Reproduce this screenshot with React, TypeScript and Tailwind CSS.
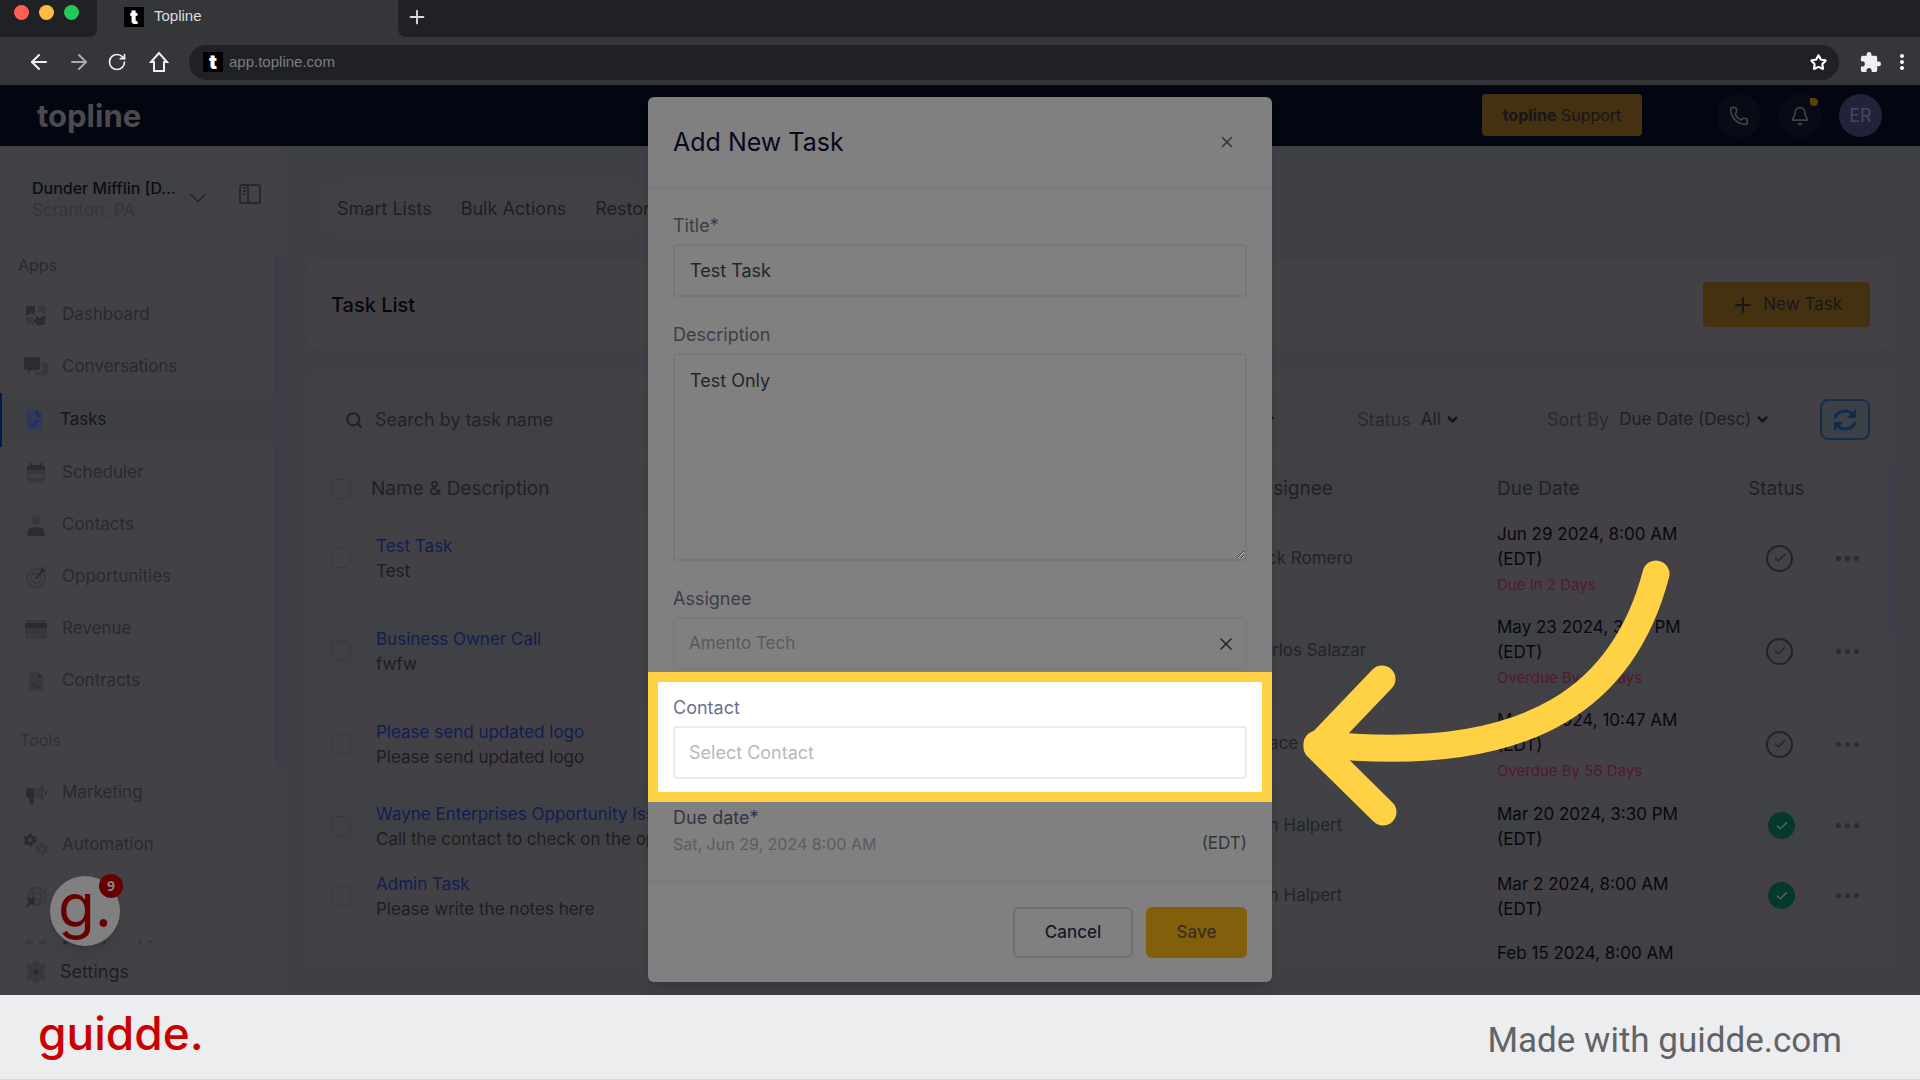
import type { ReactNode } from "react"
import {
  ArrowLeft,
  ArrowRight,
  Bell,
  Check,
  ChevronDown,
  Phone,
  Plus,
  RotateCw,
  Search,
  Star,
  X,
} from "lucide-react"
import { MdExtension, MdMoreVert } from "react-icons/md"

/* ---------- Sidebar icons (two-tone) ---------- */

const dark = "#2b2b33"
const soft = "#38383e"

const Icon = ({ children }: { children: ReactNode }) => (
  <svg viewBox="0 0 24 24" className="size-6 shrink-0" aria-hidden="true">
    {children}
  </svg>
)

const DashboardIcon = () => (
  <Icon>
    <path d="M2 14h8v8H4a2 2 0 0 1-2-2z" fill={soft} />
    <path d="M14 2h6a2 2 0 0 1 2 2v7h-3a2.500 2.500 0 0 0-5 0z" fill={soft} />
    <path d="M4 3h7v9H9a2 2 0 0 0-4 0H2V5a2 2 0 0 1 2-2z" fill={dark} />
    <path d="M12 13h2a2 2 0 0 0 4 0h3v7a2 2 0 0 1-2 2h-7v-2a2 2 0 0 1 0-4z" fill={dark} />
  </Icon>
)

const ConversationsIcon = () => (
  <Icon>
    <path d="M17 8h5a2 2 0 0 1 2 2v8a2 2 0 0 1-2 2h-1v3l-4-3h-4a2 2 0 0 1-2-2v-1h5a2 2 0 0 0 2-2z" fill={soft} />
    <path d="M2 2h12a2 2 0 0 1 2 2v9a2 2 0 0 1-2 2H7l-3 3v-3H2a2 2 0 0 1-2-2V4a2 2 0 0 1 2-2z" fill={dark} />
  </Icon>
)

const TasksIcon = () => (
  <Icon>
    <path d="M4 2h9l5 6v12a2 2 0 0 1-2 2H4a2 2 0 0 1-2-2V4a2 2 0 0 1 2-2z" fill="#303a58" />
    <path d="M12 2l6 6v1h-4a2 2 0 0 1-2-2z" fill="#19315f" />
    <path d="M6 15l3 3 5-6" fill="none" stroke="#19315f" strokeWidth="2" />
  </Icon>
)

const SchedulerIcon = () => (
  <Icon>
    <path d="M3 9h18v11a2 2 0 0 1-2 2H5a2 2 0 0 1-2-2z" fill={soft} />
    <path d="M3 9V6a2 2 0 0 1 2-2h1V2h2v2h8V2h2v2h1a2 2 0 0 1 2 2v3z" fill={dark} />
    <path d="M6 13h12v4H6z" fill="#434145" />
  </Icon>
)

const ContactsIcon = () => (
  <Icon>
    <circle cx="12" cy="7" r="5" fill={soft} />
    <path d="M3 23c0-6 3-9 9-9s9 3 9 9z" fill={dark} />
  </Icon>
)

const OpportunitiesIcon = () => (
  <Icon>
    <circle cx="12" cy="13" r="9" fill="none" stroke={soft} strokeWidth="2" />
    <circle cx="12" cy="13" r="5" fill="none" stroke={soft} strokeWidth="2" />
    <path d="M11 14l6-6" stroke={dark} strokeWidth="2" />
    <path d="M16 8l1-5 2-2v3l3 1-2 3z" fill={dark} />
  </Icon>
)

const RevenueIcon = () => (
  <Icon>
    <path d="M1 3h22v17a2 2 0 0 1-2 2H3a2 2 0 0 1-2-2z" fill={soft} />
    <path d="M1 6h22v5H1z" fill={dark} />
    <path d="M4 18h4M10 18h5" stroke="#434145" />
  </Icon>
)

const ContractsIcon = () => (
  <Icon>
    <path d="M7 3h7l5 5v12a2 2 0 0 1-2 2H7a2 2 0 0 1-2-2V5a2 2 0 0 1 2-2z" fill={soft} />
    <path d="M14 3l5 5h-5z" fill={dark} />
    <path d="M8 18l3-5 2 5h3" fill="none" stroke={dark} />
  </Icon>
)

const MarketingIcon = () => (
  <Icon>
    <path d="M10 7c5 0 8-2 10-5v20c-2-3-5-5-10-5z" fill={soft} />
    <path d="M4 7h6v16H6l-1-6a3 3 0 0 1-3-3V9a2 2 0 0 1 2-2z" fill={dark} />
    <path d="M21 10a2 2 0 0 1 0 4z" fill={dark} />
  </Icon>
)

const AutomationIcon = () => (
  <Icon>
    <circle cx="6" cy="7" r="3.500" fill="none" stroke={dark} strokeWidth="3" />
    <circle cx="6" cy="7" r="5.500" fill="none" stroke={dark} strokeWidth="2" strokeDasharray="3 3" />
    <circle cx="18" cy="16" r="3.500" fill="none" stroke={soft} strokeWidth="3" />
    <circle cx="18" cy="16" r="5.500" fill="none" stroke={soft} strokeWidth="2" strokeDasharray="3 3" />
  </Icon>
)

const SitesIcon = () => (
  <Icon>
    <g fill="none" stroke={soft} strokeWidth="2">
      <circle cx="13" cy="11" r="9" />
      <ellipse cx="13" cy="11" rx="4" ry="9" />
      <path d="M4 8h18M4 14h18" />
    </g>
    <path d="M2 14l9-2-1 9-3-2-4 4-1-2 3-4z" fill={dark} />
  </Icon>
)

const MembershipsIcon = () => (
  <Icon>
    <circle cx="5" cy="7" r="4" fill={soft} />
    <circle cx="19" cy="7" r="4" fill={soft} />
    <circle cx="12" cy="12" r="4" fill={soft} />
  </Icon>
)

const SettingsIcon = () => (
  <Icon>
    <path
      d="M10 1h4l1 3 2 1 3-1 2 4-2 2v4l2 2-2 4-3-1-2 1-1 3h-4l-1-3-2-1-3 1-2-4 2-2v-4L2 8l2-4 3 1 2-1z"
      fill={soft}
    />
    <circle cx="12" cy="12" r="3" fill={dark} />
  </Icon>
)

const apps = [
  { label: "Dashboard", icon: <DashboardIcon /> },
  { label: "Conversations", icon: <ConversationsIcon /> },
  { label: "Tasks", icon: <TasksIcon />, active: true },
  { label: "Scheduler", icon: <SchedulerIcon /> },
  { label: "Contacts", icon: <ContactsIcon /> },
  { label: "Opportunities", icon: <OpportunitiesIcon /> },
  { label: "Revenue", icon: <RevenueIcon /> },
  { label: "Contracts", icon: <ContractsIcon /> },
]

const tools = [
  { label: "Marketing", icon: <MarketingIcon /> },
  { label: "Automation", icon: <AutomationIcon /> },
  { label: "", icon: <SitesIcon /> },
  { label: "Memberships", icon: <MembershipsIcon /> },
]

const tasks = [
  { name: "Test Task", text: "Test", who: "Nick Romero", date: "Jun 29 2024, 8:00 AM", due: "Due In 2 Days", done: false },
  { name: "Business Owner Call", text: "fwfw", who: "Carlos Salazar", date: "May 23 2024, 3:45 PM", due: "Overdue By 35 Days", done: false },
  { name: "Please send updated logo", text: "Please send updated logo", who: "Grace Hall", date: "May 2 2024, 10:47 AM", due: "Overdue By 56 Days", done: false },
  { name: "Wayne Enterprises Opportunity Issue", text: "Call the contact to check on the opportunity", who: "Jim Halpert", date: "Mar 20 2024, 3:30 PM", due: "", done: true },
  { name: "Admin Task", text: "Please write the notes here", who: "Jim Halpert", date: "Mar 2 2024, 8:00 AM", due: "", done: true },
  { name: "", text: "", who: "", date: "Feb 15 2024, 8:00 AM", due: "Overdue By 132 Days", done: false },
]

/* ---------- Browser chrome ---------- */

function Favicon() {
  return (
    <span className="flex h-5 w-5 items-center justify-center bg-black font-['Inter',sans-serif] text-xl leading-5 font-black text-white">
      t
    </span>
  )
}

function BrowserChrome() {
  return (
    <div className="shrink-0 bg-[#35363a] font-['Liberation_Sans',sans-serif]">
      <div className="flex h-[37px]">
        <div className="flex w-[97px] gap-[10px] rounded-br-lg bg-[#202124] pt-[5px] pl-[14px]">
          <span className="size-[15px] rounded-full bg-[#ff5f57]" />
          <span className="size-[15px] rounded-full bg-[#febc45]" />
          <span className="size-[15px] rounded-full bg-[#21c958]" />
        </div>
        <div className="flex w-[301px] items-center gap-[10px] pb-1 pl-[27px] text-[15px] text-[#dcdde0]">
          <Favicon />
          Topline
        </div>
        <div className="flex flex-1 items-center rounded-bl-lg bg-[#202124] pb-[3px] pl-2">
          <button aria-label="New tab">
            <Plus className="size-[22px] text-[#dcdde0]" />
          </button>
        </div>
      </div>
      <div className="flex h-12 items-center pt-[2px] pr-[10px] pl-[27px]">
        <div className="flex w-[162px] gap-4 text-[#f0f0f2]">
          <button aria-label="Back"><ArrowLeft className="size-6" /></button>
          <button aria-label="Forward"><ArrowRight className="size-6 text-[#a9aaae]" /></button>
          <button aria-label="Reload"><RotateCw className="size-5" /></button>
          <button aria-label="Home">
            <svg viewBox="0 0 24 24" className="ml-1 size-6" fill="none" stroke="currentColor" strokeWidth="2">
              <path d="M4 12l8-9 8 9h-3v9H7v-9z" />
            </svg>
          </button>
        </div>
        <div className="flex h-[35px] flex-1 items-center gap-[6px] rounded-full bg-[#202124] pr-3 pl-[14px]">
          <Favicon />
          <input
            aria-label="Address"
            defaultValue="app.topline.com"
            className="flex-1 bg-transparent text-[15px] text-[#7c7d80]"
          />
          <Star className="size-[17px] text-white" strokeWidth={3} />
        </div>
        <MdExtension className="ml-5 size-[23px] text-[#eeeff1]" />
        <MdMoreVert className="-mr-1 ml-2 size-6 text-white" />
      </div>
    </div>
  )
}

/* ---------- App ---------- */

function Header() {
  return (
    <header className="flex h-[61px] shrink-0 items-center bg-[#020610] pr-[38px] pl-[37px]">
      <div className="flex-1 text-[31px] leading-none font-bold text-[#4b4a4d]">topline</div>
      <button className="mb-[1px] h-[42px] w-40 rounded bg-[#443111] text-base text-[#17161a]">
        <b>topline</b> Support
      </button>
      <button aria-label="Calls" className="ml-[75px] flex size-11 items-center justify-center rounded-full bg-[#080a16]">
        <Phone className="size-5 text-[#434348]" strokeWidth={2} />
      </button>
      <button aria-label="Notifications" className="relative ml-[17px] flex size-11 items-center justify-center rounded-full bg-[#080a16]">
        <Bell className="size-5 text-[#434348]" strokeWidth={2} />
        <span className="absolute top-1 right-1 size-2 rounded-tr-full rounded-b-full bg-[#5a3f0a]" />
      </button>
      <span className="ml-[17px] flex size-[43px] items-center justify-center rounded-full bg-[#20233a] text-lg text-[#47485a]">
        ER
      </span>
    </header>
  )
}

function NavItem({ label, icon, active = false }: { label: string; icon: ReactNode; active?: boolean }) {
  return (
    <a
      href="#"
      className={
        active
          ? "flex h-[54px] w-[274px] shrink-0 items-center gap-3 border-l-2 border-[#0a1a48] bg-[#3e4044] pl-[22px] text-[17px] text-[#14151f]"
          : "flex h-[52px] w-[274px] shrink-0 items-center gap-[14px] pl-6 text-[17px] text-[#29292f]"
      }
    >
      {icon}
      {label}
    </a>
  )
}

function Sidebar() {
  return (
    <aside className="relative flex w-[281px] shrink-0 flex-col bg-[#434145]">
      <div className="mt-[21px] ml-[19px] flex items-center gap-5">
        <button className="flex h-[62px] w-[200px] items-center rounded-xl bg-[#404144] pl-[13px] text-left">
          <span className="w-[152px]">
            <span className="block text-base leading-6 font-medium text-[#0b0d18]">Dunder Mifflin [D...</span>
            <span className="block text-[17px] leading-5 text-[#35353a]">Scranton, PA</span>
          </span>
          <ChevronDown className="size-7 text-[#202028]" strokeWidth={1} />
        </button>
        <button aria-label="Collapse sidebar" className="pb-2">
          <svg viewBox="0 0 22 20" className="h-5 w-[22px]" fill="none" stroke="#20202c" strokeWidth="1.500">
            <rect x="1" y="1" width="20" height="18" rx="2" />
            <path d="M9 1v18M4 4h3M4 7h3M4 10h3" />
          </svg>
        </button>
      </div>
      <nav className="mt-[23px] flex min-h-0 flex-1 flex-col overflow-hidden">
        <p className="h-[37px] shrink-0 pl-[18px] text-base leading-[26px] text-[#29292f]">Apps</p>
        {apps.map((a) => (
          <NavItem key={a.label} {...a} />
        ))}
        <p className="h-[60px] shrink-0 pt-5 pl-5 text-base leading-[26px] text-[#303036]">Tools</p>
        {tools.map((t) => (
          <NavItem key={t.label} {...t} />
        ))}
      </nav>
      <a href="#" className="flex h-[51px] shrink-0 items-center gap-3 pt-1 pl-6 text-lg text-[#1d1d22]">
        <SettingsIcon />
        Settings
      </a>
      <div className="absolute top-[109px] right-0 h-[512px] w-[7px] rounded-full bg-[#3e3d49]" />

      {/* Floating guide launcher */}
      <button
        aria-label="Open guides"
        className="absolute bottom-[49px] left-[50px] flex size-[70px] items-center justify-center rounded-full bg-[#808080] pb-3 text-[60px] leading-none text-[#690000] shadow-lg"
      >
        g.
        <span className="absolute -top-[2px] -right-[3px] flex size-6 items-center justify-center rounded-full bg-[#690000] font-['Open_Sans',sans-serif] text-sm font-bold text-[#858585]">
          9
        </span>
      </button>
    </aside>
  )
}

function Filter({ label, value, width }: { label: string; value: string; width: string }) {
  return (
    <label className={`flex h-[54px] items-center justify-center gap-[10px] rounded-lg bg-[#404144] text-lg text-[#29292f] ${width}`}>
      {label}
      <span className="flex items-center gap-1">
        <select className="appearance-none bg-transparent text-[17px] text-[#1e1e24] [field-sizing:content]">
          <option>{value}</option>
        </select>
        <ChevronDown className="size-[15px] text-[#12121c]" strokeWidth={4} />
      </span>
    </label>
  )
}

function StatusMark({ done }: { done: boolean }) {
  return (
    <span
      className={
        done
          ? "ml-5 flex size-[27px] items-center justify-center rounded-full bg-[#06392c] text-[#5c7068]"
          : "ml-[18px] flex size-[27px] items-center justify-center rounded-full border-2 border-[#222228] text-[#222228]"
      }
    >
      <Check className="size-[14px]" />
    </span>
  )
}

function TaskTable() {
  const box = "block size-5 appearance-none rounded border border-[#39383d]"
  return (
    <div className="relative min-h-0 flex-1 overflow-hidden">
      <table className="w-full table-fixed text-left">
        <thead>
          <tr className="h-[46px] border-y border-[#3c3d41] bg-[#404144] text-[19px] leading-6 text-[#202028]">
            <th className="w-[65px] pl-[25px]">
              <input type="checkbox" aria-label="Select all" className={box} />
            </th>
            <th className="font-normal">Name &amp; Description</th>
            <th className="w-[247px] font-normal">Assignee</th>
            <th className="w-[251px] font-normal">Due Date</th>
            <th className="w-[88px] font-normal">Status</th>
            <th className="w-[59px]" aria-label="Actions" />
          </tr>
        </thead>
        <tbody>
          {tasks.map((t) => (
            <tr key={t.date} className={t.due ? "h-[93px] even:bg-[#404144]" : "h-[70px] even:bg-[#404144]"}>
              <td className="pl-[25px]">
                <input type="checkbox" aria-label={`Select ${t.name || t.date}`} className={box} />
              </td>
              <td className="truncate pt-[2px] pl-[5px] text-[17px] leading-[25px]">
                <a href="#" className="block text-[#101e52]">{t.name}</a>
                <span className="text-[#1d1d22]">{t.text}</span>
              </td>
              <td className="text-[17px] text-[#22232b]">{t.who}</td>
              <td className="pt-[2px] text-[17px] leading-[25px] text-[#08080f]">
                {t.date}
                <span className="block">(EDT)</span>
                {t.due && <span className="block text-[15px] leading-[25px] text-[#54192f]">{t.due}</span>}
              </td>
              <td><StatusMark done={t.done} /></td>
              <td>
                <button aria-label="More" className="flex gap-1">
                  <span className="size-[5px] rounded-full bg-[#2b2b33]" />
                  <span className="size-[5px] rounded-full bg-[#2b2b33]" />
                  <span className="size-[5px] rounded-full bg-[#2b2b33]" />
                </button>
              </td>
            </tr>
          ))}
        </tbody>
      </table>
      <div className="absolute top-0 right-0 h-[170px] w-[7px] rounded-full bg-[#3e3d49]" />
    </div>
  )
}

function TaskPage() {
  return (
    <main className="flex min-w-0 flex-1 flex-col bg-[#3f4045] pr-[25px] pb-[31px] pl-[25px]">
      <nav className="mt-[37px] ml-[14px] flex h-[51px] w-fit items-center gap-[29px] rounded-full bg-[#414145] px-[17px] text-lg text-[#1e1e24]">
        <a href="#">Smart Lists</a>
        <a href="#">Bulk Actions</a>
        <a href="#">Restore</a>
      </nav>
      <section className="mt-[26px] flex h-[89px] shrink-0 items-center justify-between rounded-xl bg-[#434145] px-[25px]">
        <h1 className="text-xl font-medium text-[#07080f]">Task List</h1>
        <button className="flex h-[45px] items-center gap-2 rounded bg-[#443111] px-7 text-[17px] text-[#19171a]">
          <Plus className="size-6" strokeWidth={2} />
          New Task
        </button>
      </section>
      <section className="mt-[25px] flex min-h-0 flex-1 flex-col rounded-t-xl bg-[#434145]">
        <div className="flex h-[91px] shrink-0 items-center gap-[13px] px-[25px]">
          <label className="flex h-[49px] w-[500px] items-center gap-3 rounded bg-[#404144] pl-[14px]">
            <Search className="size-[18px] text-[#222228]" strokeWidth={3} />
            <input
              aria-label="Search by task name"
              placeholder="Search by task name"
              className="flex-1 bg-transparent text-lg placeholder:text-[#222228]"
            />
          </label>
          <div className="flex flex-1 justify-end gap-[13px]">
            <Filter label="Assignee" value="All" width="w-[190px]" />
            <Filter label="Status" value="All" width="w-[177px]" />
            <Filter label="Sort By" value="Due Date (Desc)" width="w-[297px]" />
          </div>
          <button aria-label="Refresh" className="flex h-[41px] w-[50px] items-center justify-center rounded-lg border-2 border-[#152f48] bg-[#3c4147]">
            <svg viewBox="0 0 24 24" className="size-6" fill="none" stroke="#0e2c4b" strokeWidth="3">
              <path d="M2 10a10 9 0 0 1 18-3M22 14a10 9 0 0 1-18 3" />
              <path d="M23 1v9h-9zM1 23v-9h9z" fill="#0e2c4b" stroke="none" />
            </svg>
          </button>
        </div>
        <TaskTable />
      </section>
    </main>
  )
}

/* ---------- Modal ---------- */

function TaskModal() {
  const label = "block h-[36px] text-lg leading-[36px] text-[#3c3c4a]"
  return (
    <div
      role="dialog"
      aria-labelledby="modal-title"
      className="absolute top-[97px] left-1/2 flex h-[885px] w-[624px] -translate-x-1/2 flex-col rounded-md bg-[#808080] shadow-lg"
    >
      <div className="flex h-[91px] shrink-0 items-center justify-between border-b border-[#777779] pr-9 pl-[25px]">
        <h2 id="modal-title" className="pt-[2px] text-[25px] text-[#060a1c]">Add New Task</h2>
        <button aria-label="Close"><X className="size-[18px] text-[#2b2f3c]" strokeWidth={2} /></button>
      </div>
      <form className="flex flex-1 flex-col px-[25px] pt-5">
        <label htmlFor="title" className={label}>Title*</label>
        <input
          id="title"
          defaultValue="Test Task"
          className="h-[53px] shrink-0 rounded border-2 border-[#77777a] px-[15px] text-lg text-[#20262e]"
        />
        <label htmlFor="description" className={`${label} mt-5`}>Description</label>
        <textarea
          id="description"
          defaultValue="Test Only"
          className="h-[208px] shrink-0 rounded border-2 border-[#77777a] px-[15px] py-[14px] text-lg leading-6 text-[#20262e]"
        />
        <label htmlFor="assignee" className={`${label} mt-5`}>Assignee</label>
        <div className="flex h-[53px] shrink-0 items-center rounded border-2 border-[#7b7b7d] pr-[9px] pl-[14px]">
          <input
            id="assignee"
            placeholder="Amento Tech"
            className="flex-1 bg-transparent text-[17px] placeholder:text-[#57595d]"
          />
          <button type="button" aria-label="Clear assignee">
            <X className="size-5 text-[#20262e]" strokeWidth={2} />
          </button>
        </div>
        {/* Highlighted step */}
        <div className="-mx-[25px] mt-[2px] h-[130px] shrink-0 border-10 border-[#ffd145] bg-white px-[15px] pt-2">
          <label htmlFor="contact" className="block h-9 text-lg leading-9 text-[#6c7089]">Contact</label>
          <input
            id="contact"
            placeholder="Select Contact"
            className="block h-[53px] w-full rounded border-2 border-[#ebebf0] px-[14px] text-lg placeholder:text-[#b3babd]"
          />
        </div>
        <label htmlFor="due" className="mt-[2px] block h-[27px] text-lg leading-[27px] text-[#343444]">Due date*</label>
        <div className="flex h-[26px] items-center">
          <input
            id="due"
            defaultValue="Sat, Jun 29, 2024 8:00 AM"
            className="flex-1 bg-transparent text-base text-[#5b5b60]"
          />
          <span className="text-[17px] text-[#2d3838]">(EDT)</span>
        </div>
      </form>
      <div className="flex h-[101px] shrink-0 justify-end gap-[13px] border-t border-[#777779] pt-[25px] pr-[25px]">
        <button className="h-[51px] w-[120px] rounded-md border-2 border-[#6e6e71] text-[17px] font-medium text-[#141a28]">Cancel</button>
        <button className="h-[51px] w-[101px] rounded-md bg-[#825f0b] text-[17px] font-medium text-[#39301f]">Save</button>
      </div>
    </div>
  )
}

function PointerArrow() {
  return (
    <svg
      viewBox="1300 560 370 270"
      className="pointer-events-none absolute top-[560px] left-1/2 ml-[340px] h-[270px] w-[370px]"
      fill="none"
      stroke="#ffd145"
      strokeWidth="27"
      strokeLinecap="round"
      strokeLinejoin="round"
    >
      <path d="M1656 574C1626 688 1540 768 1317 744" />
      <path d="M1382 679L1317 747L1383 812" />
    </svg>
  )
}

export default function App() {
  return (
    <div className="relative flex h-screen flex-col overflow-hidden font-['Inter',sans-serif]">
      <BrowserChrome />
      <Header />
      <div className="flex min-h-0 flex-1">
        <Sidebar />
        <TaskPage />
      </div>
      <footer className="relative z-10 flex h-[85px] shrink-0 items-center justify-between border-b border-[#d8d9db] bg-[#ecedef] pr-[78px] pl-[38px]">
        <span className="pb-2 text-[46px] leading-none font-medium text-[#cb0000]">guidde.</span>
        <span className="pt-2 font-['Roboto',sans-serif] text-[35px] text-[#616366]">Made with guidde.com</span>
      </footer>
      <TaskModal />
      <PointerArrow />
    </div>
  )
}
